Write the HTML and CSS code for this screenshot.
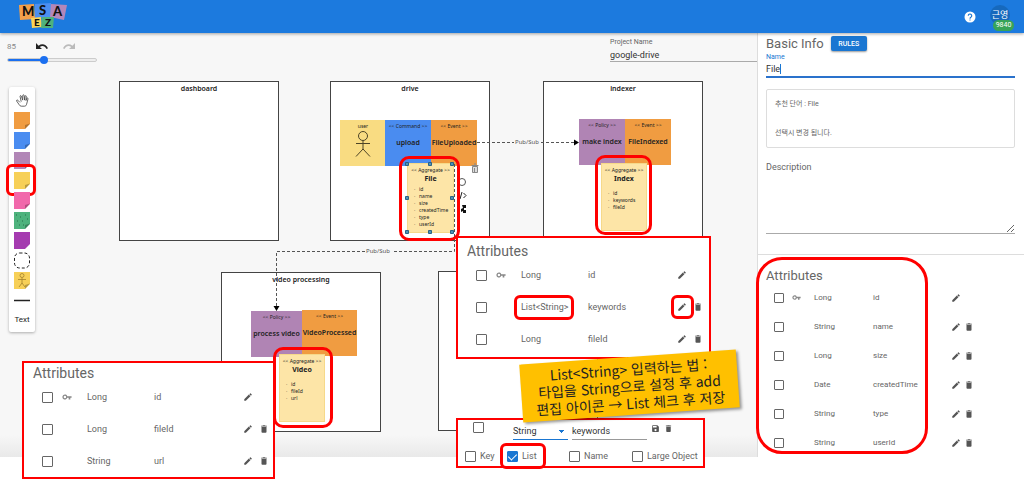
FILE: index.html
```html
<!DOCTYPE html>
<html lang="ko">
<head>
<meta charset="utf-8">
<title>MSA EZ - google-drive</title>
<link rel="stylesheet" href="styles.css">
</head>
<body>
<svg class="symbols" aria-hidden="true">
  <symbol id="pencil" viewBox="0 0 24 24"><path d="M3 17.2V21h3.800L17.800 9.900l-3.700-3.700zM20.700 7c.4-.4.4-1 0-1.400l-2.300-2.300c-.4-.4-1-.4-1.400 0l-1.800 1.800 3.700 3.700z"/></symbol>
  <symbol id="trash" viewBox="0 0 24 24"><path d="M6 19c0 1.100.9 2 2 2h8c1.100 0 2-.9 2-2V7H6zM19 4h-3.500l-1-1h-5l-1 1H5v2h14z"/></symbol>
  <symbol id="key" viewBox="0 0 24 24"><path fill-rule="evenodd" d="M12.600 10A6 6 0 1 0 12.600 14H16v4h4v-4h3v-4zM7 9a3 3 0 1 1 0 6 3 3 0 0 1 0-6z"/></symbol>
  <symbol id="save" viewBox="0 0 24 24"><path fill-rule="evenodd" d="M17 3H5a2 2 0 0 0-2 2v14c0 1.100.9 2 2 2h14a2 2 0 0 0 2-2V7zM12 19a3 3 0 1 1 0-6 3 3 0 0 1 0 6zM15 9H5V5h10z"/></symbol>
  <symbol id="note" viewBox="0 0 16 17"><path d="M0 0h16v12l-5 5H0z"/><path d="M16 11.500l-5 1.500v4z" fill="#000" opacity=".25"/></symbol>
</svg>

<header class="appbar">
  <svg class="logo" viewBox="0 0 48 26" role="img" aria-label="MSA EZ">
    <path d="M0 2l15-1 1 15-15 1z" fill="#f3a04b"/>
    <path d="M16 1l16-1v14l-16 1z" fill="#4c8ff0"/>
    <path d="M32 1l16 1-3 15-14-3z" fill="#b387b9"/>
    <path d="M12 15l10-1 1 10-10 1z" fill="#fbd457"/>
    <path d="M23 14h12l-1 11H22z" fill="#4eb27d"/>
    <text x="3" y="13" class="logo-big">M</text><text x="20" y="12" class="logo-big">S</text><text x="34" y="13" class="logo-big">A</text>
    <text x="15" y="23" class="logo-small">E</text><text x="26" y="23" class="logo-small">Z</text>
  </svg>
  <button class="help" aria-label="Help"><svg viewBox="0 0 24 24"><circle cx="12" cy="12" r="11" fill="#fff"/><path d="M8.500 9.500a3.500 3.500 0 1 1 5.500 2.800c-1.300 1-2 1.400-2 3M12 17v2.200" fill="none" stroke="#1976d2" stroke-width="2.200"/></svg></button>
  <button class="avatar">근영<span class="badge">9840</span></button>
</header>

<main class="workspace">
  <section class="canvas">
    <div class="topbar">
      <div class="zoom">
        <div class="zoom-row">
          <label for="zoom">85</label>
          <button aria-label="Undo"><svg viewBox="0 0 12 8"><path d="M0 0v6h6L3.800 4C6 2.200 9 2.800 10.500 6L12 5.300C10 1 5.800.2 2.600 2.700z"/></svg></button>
          <button class="off" aria-label="Redo"><svg viewBox="0 0 12 8"><path d="M12 0v6H6l2.200-2C6 2.200 3 2.800 1.500 6L0 5.300C2 1 6.200.2 9.400 2.700z"/></svg></button>
        </div>
        <input id="zoom" type="range" min="0" max="200" value="81">
      </div>
      <div class="project">
        <label for="project">Project Name</label>
        <input id="project" type="text" value="google-drive">
      </div>
    </div>

    <nav class="palette" aria-label="Tools">
      <button aria-label="Hand"><svg class="hand" viewBox="0 0 16 16" fill="none" stroke="#444" stroke-linecap="round" stroke-linejoin="round"><path d="M4.500 10L2 7.500c-.8-.8-1.800.3-1.200 1.200L4 13.300c.6 1 1.300 1.700 2.500 1.700h3.800c1.500 0 2.300-.8 2.700-2.300L14.800 6c.2-1.300-1.400-1.500-1.700-.4L12.300 8l.4-5c0-1.200-1.600-1.200-1.700 0l-.5 4.500L10 1.800C9.900.6 8.300.7 8.300 1.900L8.200 7.500 6.600 2.600C6.200 1.500 4.700 2 5 3.100L6.300 9"/></svg></button>
      <button aria-label="Event" class="c-event"><svg viewBox="0 0 16 17"><use href="#note"/></svg></button>
      <button aria-label="Command" class="c-command"><svg viewBox="0 0 16 17"><use href="#note"/></svg></button>
      <button aria-label="Policy" class="c-policy"><svg viewBox="0 0 16 17"><use href="#note"/></svg></button>
      <button aria-label="Aggregate" class="c-aggregate"><svg viewBox="0 0 16 17"><use href="#note"/></svg><span class="mark"></span></button>
      <button aria-label="External" class="c-external"><svg viewBox="0 0 16 17"><use href="#note"/></svg></button>
      <button aria-label="View" class="c-view"><svg viewBox="0 0 16 17"><use href="#note"/><path d="M2 3h1M6 5h1M11 3h1M3 9h1M8 9h1M13 7h1M5 13h1M9 13h1" stroke="#24704a"/></svg></button>
      <button aria-label="Issue" class="c-issue"><svg viewBox="0 0 16 17"><path d="M0 0h16v12l-5 5H0z"/></svg></button>
      <button aria-label="Bounded context"><svg viewBox="0 0 16 17" fill="none" stroke="#222" stroke-dasharray="3 2"><rect x=".5" y="1" width="15" height="15" rx="5"/></svg></button>
      <button aria-label="Actor" class="c-aggregate"><svg viewBox="0 0 16 17"><use href="#note"/><g fill="none" stroke="#a3822c" stroke-width=".8"><circle cx="8" cy="3.500" r="2"/><path d="M8 5.500V11M4 7.500h8M5 15l3-4 3 4"/></g></svg></button>
      <button aria-label="Relation"><svg viewBox="0 0 16 17"><path d="M0 8.500h16" stroke="#222" stroke-width="1.500"/></svg></button>
      <button class="text-tool">Text</button>
    </nav>

    <div class="diagram">
      <section class="context ctx-dashboard"><h3>dashboard</h3></section>
      <section class="context ctx-drive"><h3>drive</h3></section>
      <section class="context ctx-indexer"><h3>indexer</h3></section>
      <section class="context ctx-video"><h3>video processing</h3></section>
      <section class="context ctx-next"></section>

      <div class="sticky n-user"><small>user</small><svg viewBox="0 0 16 26" fill="none" stroke="#4d4426"><circle cx="8" cy="5" r="4.500"/><path d="M8 9.500V18M1 12.500h14M1 25.500l7-7.500 7 7.500"/></svg></div>
      <div class="sticky n-upload"><small>&lt;&lt; Command &gt;&gt;</small><b>upload</b></div>
      <div class="sticky n-uploaded"><small>&lt;&lt; Event &gt;&gt;</small><b>FileUploaded</b></div>
      <div class="sticky n-make"><small>&lt;&lt; Policy &gt;&gt;</small><b>make index</b></div>
      <div class="sticky n-indexed"><small>&lt;&lt; Event &gt;&gt;</small><b>FileIndexed</b></div>
      <div class="sticky n-process"><small>&lt;&lt; Policy &gt;&gt;</small><b>process video</b></div>
      <div class="sticky n-processed"><small>&lt;&lt; Event &gt;&gt;</small><b>VideoProcessed</b></div>
      <div class="aggregate n-file"><small>&lt;&lt; Aggregate &gt;&gt;</small><b>File</b><ul><li>id</li><li>name</li><li>size</li><li>createdTime</li><li>type</li><li>userId</li></ul></div>
      <div class="aggregate n-index"><small>&lt;&lt; Aggregate &gt;&gt;</small><b>Index</b><ul><li>id</li><li>keywords</li><li>fileId</li></ul></div>
      <div class="aggregate n-video"><small>&lt;&lt; Aggregate &gt;&gt;</small><b>Video</b><ul><li>id</li><li>fileId</li><li>url</li></ul></div>

      <svg class="links" width="740" height="410" viewBox="0 33 740 410">
        <g fill="none" stroke="#555" stroke-dasharray="3 2">
          <path d="M477 142.500H514M541 142.500H574"/>
          <path d="M454.500 164V251.500H392M365 251.500H276.500V306"/>
        </g>
        <path d="M574 139.500l5 3-5 3zM273.500 306h6l-3 5z"/>
        <g fill="#4e93b8" stroke="#2b6285">
          <path d="M405.500 162.500h3v3h-3zM428.500 162.500h3v3h-3zM450.500 162.500h3v3h-3zM405.500 196.500h3v3h-3zM450.500 196.500h3v3h-3zM405.500 230.500h3v3h-3zM428.500 230.500h3v3h-3zM450.500 230.500h3v3h-3z"/>
        </g>
        <g fill="#ddd" stroke="#888"><path d="M472.500 166.500h5v6h-5zM471.500 165.500h7M474 164h2M474.500 168v4"/></g>
        <g fill="none" stroke="#555"><circle cx="462" cy="182" r="3.500"/><path d="M463.500 193l2.500 2.500-2.500 2.500M462 192l-2 7" stroke="#222"/></g>
        <path d="M462 205h4v3h-2v2h2v3h-3v-2l-2 1v-3l2-1z" fill="#111"/>
      </svg>
      <span class="link-label l-one">Pub/Sub</span>
      <span class="link-label l-two">Pub/Sub</span>
      <span class="mark m-file"></span>
      <span class="mark m-index"></span>
    </div>

    <section class="callout c-left">
      <h2>Attributes</h2>
      <table class="attrs">
        <colgroup><col class="w-check"><col class="w-key"><col class="w-type"><col class="w-name"><col class="w-edit"><col class="w-del"></colgroup>
        <tr><td><input type="checkbox" aria-label="id"></td><td><svg class="key"><use href="#key"/></svg></td><td>Long</td><td>id</td><td><button aria-label="Edit id"><svg><use href="#pencil"/></svg></button></td><td></td></tr>
        <tr><td><input type="checkbox" aria-label="fileId"></td><td></td><td>Long</td><td>fileId</td><td><button aria-label="Edit fileId"><svg><use href="#pencil"/></svg></button></td><td><button aria-label="Delete fileId"><svg><use href="#trash"/></svg></button></td></tr>
        <tr><td><input type="checkbox" aria-label="url"></td><td></td><td>String</td><td>url</td><td><button aria-label="Edit url"><svg><use href="#pencil"/></svg></button></td><td><button aria-label="Delete url"><svg><use href="#trash"/></svg></button></td></tr>
      </table>
    </section>
    <span class="mark m-video"></span>

    <section class="callout c-mid">
      <h2>Attributes</h2>
      <table class="attrs">
        <colgroup><col class="w-check"><col class="w-key"><col class="w-type"><col class="w-name"><col class="w-edit"><col class="w-del"></colgroup>
        <tr><td><input type="checkbox" aria-label="id"></td><td><svg class="key"><use href="#key"/></svg></td><td>Long</td><td>id</td><td><button aria-label="Edit id"><svg><use href="#pencil"/></svg></button></td><td></td></tr>
        <tr><td><input type="checkbox" aria-label="keywords"></td><td></td><td>List&lt;String&gt;</td><td>keywords</td><td><button aria-label="Edit keywords"><svg><use href="#pencil"/></svg></button></td><td><button aria-label="Delete keywords"><svg><use href="#trash"/></svg></button></td></tr>
        <tr><td><input type="checkbox" aria-label="fileId"></td><td></td><td>Long</td><td>fileId</td><td><button aria-label="Edit fileId"><svg><use href="#pencil"/></svg></button></td><td><button aria-label="Delete fileId"><svg><use href="#trash"/></svg></button></td></tr>
      </table>
      <span class="mark m-type"></span>
      <span class="mark m-edit"></span>
    </section>

    <section class="callout c-form">
      <div class="form-row">
        <input type="checkbox" aria-label="keywords">
        <select aria-label="Type"><option>String</option></select>
        <input type="text" aria-label="Name" value="keywords">
        <button aria-label="Save"><svg><use href="#save"/></svg></button>
        <button aria-label="Delete"><svg><use href="#trash"/></svg></button>
      </div>
      <div class="flags">
        <label><input type="checkbox">Key</label>
        <label><input type="checkbox" checked>List<span class="mark"></span></label>
        <label><input type="checkbox">Name</label>
        <label><input type="checkbox">Large Object</label>
      </div>
    </section>

    <p class="tip">List&lt;String&gt; 입력하는 법 :<br>타입을 String으로 설정 후 add<br>편집 아이콘 → List 체크 후 저장</p>
  </section>

  <aside class="panel">
    <section class="info">
      <div class="info-head"><h2>Basic Info</h2><button class="rules">RULES</button></div>
      <label class="name-label" for="name">Name</label>
      <div class="name-field"><input id="name" type="text" value="File"><span class="caret"></span></div>
      <div class="hint"><p>추천 단어 : File</p><p>선택시 변경 됩니다.</p></div>
      <label class="desc-label" for="desc">Description</label>
      <textarea id="desc"></textarea>
    </section>
    <section class="attributes">
      <h2>Attributes</h2>
      <table class="attrs">
        <colgroup><col class="w-check"><col class="w-key"><col class="w-type"><col class="w-name"><col class="w-edit"><col class="w-del"></colgroup>
        <tr><td><input type="checkbox" aria-label="id"></td><td><svg class="key"><use href="#key"/></svg></td><td>Long</td><td>id</td><td><button aria-label="Edit id"><svg><use href="#pencil"/></svg></button></td><td></td></tr>
        <tr><td><input type="checkbox" aria-label="name"></td><td></td><td>String</td><td>name</td><td><button aria-label="Edit name"><svg><use href="#pencil"/></svg></button></td><td><button aria-label="Delete name"><svg><use href="#trash"/></svg></button></td></tr>
        <tr><td><input type="checkbox" aria-label="size"></td><td></td><td>Long</td><td>size</td><td><button aria-label="Edit size"><svg><use href="#pencil"/></svg></button></td><td><button aria-label="Delete size"><svg><use href="#trash"/></svg></button></td></tr>
        <tr><td><input type="checkbox" aria-label="createdTime"></td><td></td><td>Date</td><td>createdTime</td><td><button aria-label="Edit createdTime"><svg><use href="#pencil"/></svg></button></td><td><button aria-label="Delete createdTime"><svg><use href="#trash"/></svg></button></td></tr>
        <tr><td><input type="checkbox" aria-label="type"></td><td></td><td>String</td><td>type</td><td><button aria-label="Edit type"><svg><use href="#pencil"/></svg></button></td><td><button aria-label="Delete type"><svg><use href="#trash"/></svg></button></td></tr>
        <tr><td><input type="checkbox" aria-label="userId"></td><td></td><td>String</td><td>userId</td><td><button aria-label="Edit userId"><svg><use href="#pencil"/></svg></button></td><td><button aria-label="Delete userId"><svg><use href="#trash"/></svg></button></td></tr>
      </table>
      <span class="mark m-panel"></span>
    </section>
  </aside>
</main>
</body>
</html>
```
FILE: styles.css
```css
* { box-sizing: border-box; }
body { margin: 0; min-height: 100vh; background: #fff; color: #666; font: 8px/12px Roboto, "Noto Sans CJK KR", sans-serif; }
h2, h3, p, ul { margin: 0; padding: 0; font-weight: 400; }
button { display: block; margin: 0; padding: 0; border: 0; background: none; color: inherit; font: inherit; }
svg { display: block; }
input, select, textarea { margin: 0; font: inherit; color: #333; }
.symbols { position: absolute; width: 0; height: 0; }

/* Red emphasis frames */
.mark { position: absolute; border: 3px solid #f00; border-radius: 6px; pointer-events: none; }

/* App bar */
.appbar { position: relative; z-index: 2; display: flex; align-items: center; height: 33px; padding: 0 14px 0 19px; background: #1c7ade; box-shadow: 0 1px 3px rgba(0, 0, 0, .35); }
.logo { width: 48px; height: 26px; margin-right: auto; margin-bottom: 1px; }
.logo-big { font: 900 13px Lato, sans-serif; fill: #111; }
.logo-small { font: 900 10px Lato, sans-serif; fill: #111; }
.help svg { width: 12px; height: 12px; }
.avatar { position: relative; width: 20px; height: 20px; margin: 0 0 3px 14px; border-radius: 10px; background: #1669bd; color: #fff; font-size: 9px; line-height: 20px; white-space: nowrap; }
.badge { position: absolute; left: 3px; top: 15px; width: 21px; border-radius: 6px; background: #38a457; font-size: 7px; line-height: 11px; text-align: center; }

.workspace { display: grid; grid-template-columns: minmax(0, 1fr) 267px; }

/* Canvas */
.canvas { position: relative; background: linear-gradient(to top, #e9e9e9, #f7f7f7 22px); }
.topbar { position: relative; z-index: 1; display: flex; justify-content: space-between; padding: 3px 0 0 7px; }
.zoom { width: 90px; padding-top: 5px; }
.zoom-row { display: flex; align-items: center; gap: 15px; color: #888; }
.zoom-row label { width: 14px; }
.zoom-row svg { width: 12px; height: 8px; fill: #222; }
.zoom-row .off svg { fill: #bbb; }
#zoom { display: block; appearance: none; width: 90px; height: 14px; background: none; }
#zoom::-webkit-slider-runnable-track { height: 4px; border: 1px solid #ccc; border-radius: 2px; background: linear-gradient(to right, #1a6ff0 41%, #eee 41%); }
#zoom::-webkit-slider-thumb { appearance: none; width: 8px; height: 8px; margin-top: -3px; border-radius: 4px; background: #1a6ff0; }
.project { width: 147px; }
.project label { display: block; font-size: 7px; line-height: 12px; }
.project input { display: block; width: 100%; height: 14px; padding: 0; border: 0; border-bottom: 1px solid #aaa; background: none; font-size: 9px; line-height: 10px; }

.palette { position: relative; z-index: 1; display: flex; flex-direction: column; width: 26px; margin: 20px 0 0 9px; padding: 3px 5px 2px; border-radius: 2px; background: #fff; box-shadow: 0 1px 3px rgba(0, 0, 0, .3); }
.palette button { position: relative; display: flex; align-items: center; height: 20px; }
.palette svg { width: 16px; height: 17px; }
.palette .hand { width: 13px; height: 13px; margin: 0 auto; }
.palette .mark { left: -8px; top: -6px; width: 30px; height: 32px; }
.palette .text-tool { justify-content: center; color: #222; }
.c-event { fill: #f09c41; }
.c-command { fill: #4a8cf0; }
.c-policy { fill: #b287b7; }
.c-aggregate { fill: #f7d058; }
.c-external { fill: #f168ab; }
.c-view { fill: #4eb27d; }
.c-issue { fill: #a53bb0; }

/* Diagram */
.diagram { position: absolute; inset: 0; color: #222; font: 5px/7px "Noto Sans", sans-serif; }
.context { position: absolute; width: 160px; height: 160px; border: 1px solid #444; background: #fff; }
.context h3 { margin-top: 2px; font-size: 7px; line-height: 9px; font-weight: 600; text-align: center; }
.ctx-dashboard { left: 119px; top: 48px; }
.ctx-drive { left: 330px; top: 48px; }
.ctx-indexer { left: 543px; top: 48px; }
.ctx-video { left: 221px; top: 239px; }
.ctx-next { left: 438px; top: 238px; }
.sticky, .aggregate { position: absolute; display: flex; flex-direction: column; align-items: center; white-space: nowrap; }
.sticky { width: 46px; height: 46px; padding-top: 3px; }
.sticky small, .aggregate small { font-size: 5px; line-height: 7px; }
.sticky b { margin-top: 8px; font-size: 7px; line-height: 10px; font-weight: 600; }
.sticky svg { width: 16px; height: 26px; margin-top: 1px; }
.n-user { left: 340px; top: 87px; background: #f9dc82; }
.n-upload { left: 385px; top: 87px; background: #4a8cf0; }
.n-uploaded { left: 431px; top: 87px; background: #f09c41; }
.n-make { left: 579px; top: 86px; background: #b084b4; }
.n-indexed { left: 625px; top: 86px; background: #f09c41; }
.n-process { left: 251px; top: 278px; width: 51px; background: #b084b4; }
.n-processed { left: 302px; top: 277px; width: 55px; background: #f09c41; }
.aggregate { width: 46px; height: 68px; padding-top: 3px; border: 1px solid #f6d98a; background: #fde5a7; }
.aggregate b { font-size: 7px; line-height: 10px; }
.aggregate ul { align-self: stretch; margin-top: 6px; padding-left: 11px; list-style: none; }
.aggregate li::before { content: "·"; float: left; margin-left: -5px; }
.n-file { left: 407px; top: 130px; width: 47px; height: 70px; }
.n-file ul { margin-top: 2px; }
.n-index { left: 601px; top: 130px; }
.n-video { left: 279px; top: 321px; }
.links { position: absolute; left: 0; top: 0; }
.link-label { position: absolute; width: 26px; color: #555; font-size: 6px; line-height: 8px; text-align: center; }
.l-one { left: 514px; top: 105px; }
.l-two { left: 365px; top: 214px; }
.m-file { left: 399px; top: 123px; width: 61px; height: 85px; border-radius: 10px; }
.m-index { left: 595px; top: 122px; width: 57px; height: 80px; border-radius: 10px; }
.m-video { left: 273px; top: 314px; width: 60px; height: 81px; border-radius: 10px; }

/* Attribute tables */
.attrs { width: 247px; table-layout: fixed; border-collapse: collapse; }
.attrs td { height: 32px; padding: 0; vertical-align: middle; white-space: nowrap; }
.attrs svg { width: 10px; height: 10px; fill: #555; }
.attrs button { margin: 0 auto; }
.attrs input { display: block; margin-left: auto; margin-right: 5px; }
.attrs .key { margin-left: 4px; fill: #888; }
.w-check { width: 34px; }
.w-key { width: 29px; }
.w-type { width: 67px; }
.w-name { width: 86px; }
.w-edit { width: 16px; }
.w-del { width: 15px; }
input[type="checkbox"] { appearance: none; flex: none; width: 11px; height: 11px; border: 1px solid #666; border-radius: 1px; background: #fff; }
input[type="checkbox"]:checked { border-color: #1976d2; background: #1976d2; }
input[type="checkbox"]:checked::after { content: ""; display: block; width: 4px; height: 7px; margin: 0 auto; border: solid #fff; border-width: 0 1px 1px 0; transform: rotate(45deg); }

.callout { position: absolute; z-index: 1; border: 2px solid #f00; background: #fff; font-size: 9px; }
.callout h2 { padding: 2px 9px 0; font-size: 14px; line-height: 16px; }
.c-left { left: 22px; top: 328px; width: 253px; }
.c-mid { left: 456px; top: 203px; width: 255px; padding-bottom: 2px; }
.c-mid h2 { padding-top: 5px; }
.m-video { z-index: 2; }
.m-type { left: 56px; top: 57px; width: 60px; height: 25px; }
.m-edit { left: 213px; top: 57px; width: 23px; height: 24px; }

.c-form { left: 456px; top: 385px; width: 249px; padding: 2px 10px 4px; }
.form-row { display: flex; align-items: flex-start; padding-left: 5px; }
.form-row select, .form-row input[type="text"] { height: 18px; padding: 0; border: 0; border-bottom: 1px solid #999; border-radius: 0; background: none; }
.form-row select { appearance: none; width: 55px; margin: 0 4px 0 29px; border-bottom-color: #1976d2; background: linear-gradient(to bottom right, #1976d2 50%, transparent 50%) 48px 8px / 3px 3px no-repeat, linear-gradient(to bottom left, #1976d2 50%, transparent 50%) 45px 8px / 3px 3px no-repeat; }
.form-row input[type="text"] { width: 75px; }
.form-row button { margin: 2px 0 0 4px; }
.form-row svg { width: 9px; height: 9px; fill: #555; }
.flags { display: grid; grid-template-columns: 42px 62px 63px auto; margin: 10px -8px 0 -3px; white-space: nowrap; }
.flags label { position: relative; display: flex; align-items: center; gap: 4px; }
.flags .mark { left: -7px; top: -7px; width: 46px; height: 26px; }

.tip { position: absolute; z-index: 2; left: 521px; top: 324px; width: 217px; padding: 4px 0 3px; background: #ffc000; color: #222; font: 14px/17px "Noto Sans CJK KR", sans-serif; text-align: center; white-space: nowrap; box-shadow: 2px 2px 3px rgba(0, 0, 0, .4); transform: rotate(-4deg); }

/* Side panel */
.panel { border-left: 1px solid #ddd; background: #fff; }
.panel h2 { font-size: 13px; line-height: 16px; }
.info { padding: 3px 9px 20px 8px; border-bottom: 1px solid #ddd; }
.info-head { display: flex; gap: 7px; }
.rules { width: 36px; height: 15px; border-radius: 2px; background: #1976d2; color: #fff; font-size: 7px; font-weight: 500; box-shadow: 0 1px 2px rgba(0, 0, 0, .4); }
.name-label { display: block; color: #1976d2; font-size: 7px; line-height: 10px; }
.name-field { position: relative; }
.name-field input { display: block; width: 100%; height: 16px; padding: 0; border: 0; border-bottom: 2px solid #2a72cc; font-size: 9px; }
.caret { position: absolute; left: 14px; top: 2px; width: 1px; height: 10px; background: #1976d2; }
.hint { display: grid; gap: 17px; margin: 11px 0 13px; padding: 8px; border: 1px solid #ddd; border-radius: 2px; font-size: 7px; }
.desc-label { display: block; font-size: 9px; line-height: 12px; }
textarea { display: block; width: 100%; height: 61px; padding: 0; border: 0; border-bottom: 1px solid #aaa; resize: vertical; }
.attributes { position: relative; padding-top: 14px; }
.attributes h2 { padding-left: 8px; line-height: 14px; }
.attributes .attrs { width: 217px; }
.attributes td { height: 29px; }
.attributes input { width: 10px; height: 10px; }
.attributes .w-check { width: 31px; }
.attributes .w-key { width: 25px; }
.attributes .w-type { width: 59px; }
.attributes .w-name { width: 75px; }
.attributes .w-edit { width: 15px; }
.attributes .w-del { width: 12px; }
.attributes .key { width: 9px; height: 9px; margin-left: 3px; }
.m-panel { left: -2px; top: 2px; bottom: 3px; width: 172px; border-radius: 26px; }
```
